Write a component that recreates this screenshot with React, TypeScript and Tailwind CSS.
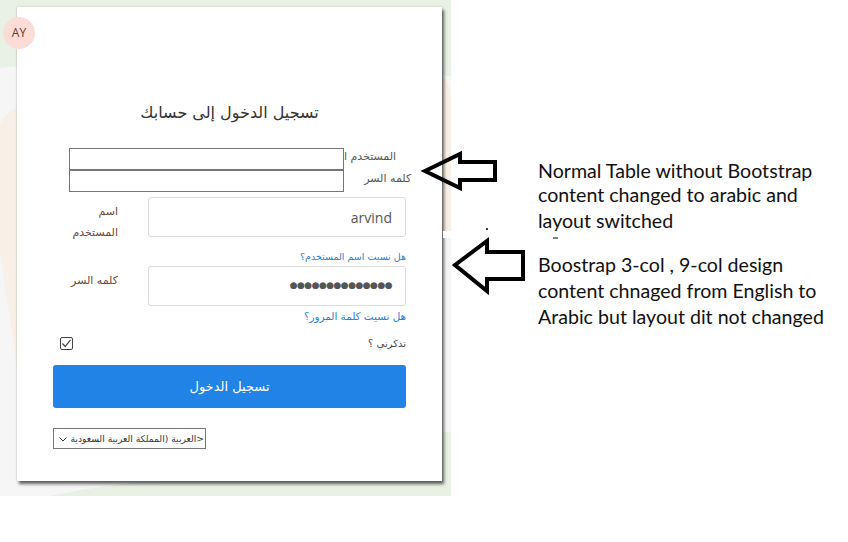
const ARABIC = "font-['DejaVu_Sans',sans-serif]"

function Backdrop() {
  return (
    <svg className="absolute inset-0" width="451" height="496" viewBox="0 0 451 496">
      <rect width="451" height="496" fill="#f6f6f6" />
      <path d="M0 0 H451 V76 C380 70 300 62 200 62 C120 62 50 62 0 68 Z" fill="#e9f0e4" />
      <path d="M0 123 C5 116 11 110 17 107 L438 74 C446 76 450 86 451 98 V232 H0 Z" fill="#f8efe6" />
      <path d="M0 230 H40 L17 365 L0 253 Z" fill="#f8efe6" />
      <path d="M451 432 V496 H50 C90 488 110 485 140 482 C250 480 350 470 440 432 Z" fill="#e9f0e4" />
    </svg>
  )
}

function FieldRow({ label, children }: { label: React.ReactNode; children: React.ReactNode }) {
  return (
    <div className="flex h-[40px] items-start">
      <div className={`w-[95px] pr-[30px] pt-[4px] text-right text-[11px] leading-[21px] text-[#6b4a3a] ${ARABIC}`}>
        {label}
      </div>
      <div className="grow">{children}</div>
    </div>
  )
}

export default function App() {
  return (
    <div className="relative flex h-[542px] w-[848px] overflow-hidden bg-white font-['Lato',sans-serif]">
      {/* screenshot of the login page */}
      <div className="relative h-[496px] w-[451px] shrink-0">
        <Backdrop />
        <div className="absolute left-[17px] top-[7px] h-[474px] w-[425px] bg-white px-[36px] shadow-[2px_3px_3px_rgba(0,0,0,0.6),0_0_2px_rgba(0,0,0,0.2)]">
          <h1 className={`mt-[94px] text-center text-[16px] leading-[24px] text-[#333] ${ARABIC}`} dir="rtl">
            تسجيل الدخول إلى حسابك
          </h1>

          {/* plain table version */}
          <div className="ml-[16px] mt-[23px] flex w-[342px]">
            <div className="w-[275px] shrink-0">
              <div className="h-[22px] border border-[#767676]" />
              <div className="h-[22px] border border-[#767676]" />
            </div>
            <div className={`grow text-[11px] text-[#555] ${ARABIC}`} dir="rtl">
              <div className="h-[22px] whitespace-nowrap pr-[15px] pt-[1px]">المستخدم ا</div>
              <div className="h-[22px] whitespace-nowrap pt-[1px]">كلمه السر</div>
            </div>
          </div>

          <div className="mt-[5px]">
            <FieldRow label={<span dir="rtl" className="block">اسم<br />المستخدم</span>}>
              <div className="flex h-[40px] items-center justify-end rounded-[3px] border border-[#dcdcdc] bg-white pr-[13px] font-['Open_Sans',sans-serif] text-[14px] text-[#555]">
                arvind
              </div>
            </FieldRow>
          </div>
          <div className={`mt-[13px] text-right text-[9.5px] leading-[14px] text-[#2a7fd6] ${ARABIC}`} dir="rtl">
            هل نسيت اسم المستخدم؟
          </div>

          <div className="mt-[2px]">
            <FieldRow label={<span dir="rtl" className="block">كلمه السر</span>}>
              <div className="flex h-[40px] items-center justify-end rounded-[3px] border border-[#dcdcdc] bg-white pr-[13px] text-[#555]">
                <span className={`text-[9px] tracking-[-0.55px] ${ARABIC}`}>●●●●●●●●●●●●●●</span>
              </div>
            </FieldRow>
          </div>
          <div className={`mt-[3px] text-right text-[10.4px] leading-[14px] text-[#2a7fd6] ${ARABIC}`} dir="rtl">
            هل نسيت كلمة المرور؟
          </div>

          <div className="mt-[13px] flex h-[14px] items-center justify-between pl-[7px]">
            <div className="flex h-[13px] w-[13px] items-center justify-center rounded-[2px] border border-[#444] bg-white">
              <svg width="11" height="11" viewBox="0 0 11 11" fill="none" stroke="#444" strokeWidth="1.2">
                <path d="M1.5 5.5 L4.2 8.5 L9.5 1.8" />
              </svg>
            </div>
            <span className={`text-[10px] text-[#444] ${ARABIC}`} dir="rtl">تذكرني ؟</span>
          </div>

          <button className={`mt-[15px] block h-[43px] w-full rounded-[3px] bg-[#2183e6] text-[13px] text-white ${ARABIC}`} dir="rtl">
            تسجيل الدخول
          </button>

          <div className="mt-[20px] flex h-[21px] w-[153px] items-center justify-between border border-[#767676] pl-[4px] pr-[1px] text-[#333]">
            <svg width="10" height="10" viewBox="0 0 10 10" fill="none" stroke="#333" strokeWidth="1">
              <path d="M1.5 3.5 L5 7 L8.5 3.5" />
            </svg>
            <span className={`whitespace-nowrap text-[9.2px] ${ARABIC}`} dir="rtl">&lt;العربية (المملكة العربية السعودية</span>
          </div>
        </div>
        {/* avatar badge hanging off the card corner */}
        <div className="absolute left-[3px] top-[17px] flex h-[32px] w-[32px] items-center justify-center rounded-full bg-[#fbdcd7] font-['Open_Sans',sans-serif] text-[12px] font-medium text-[#6f3529]">
          AY
        </div>
        {/* paste seam in the screenshot */}
        <div className="absolute left-[443px] top-[231px] h-[7px] w-[8px] bg-white" />
      </div>

      {/* hand-drawn arrows */}
      <svg className="absolute left-0 top-0" width="848" height="542" viewBox="0 0 848 542" fill="none" stroke="black" strokeWidth="4">
        <polygon points="425,171 460,154 460,162 495,162 495,180 460,180 460,188" />
        <polygon points="455,265 487,241 487,252 523,252 523,279 487,279 487,291" />
        <path d="M487 228 V230" strokeWidth="1.5" />
        <path d="M553 238 H558" strokeWidth="1" />
      </svg>

      {/* notes */}
      <div className="absolute left-[538px] top-[158px] text-[19.6px] leading-[25px] text-[#111]">
        <div>Normal Table without Bootstrap</div>
        <div className="-mt-[1px]">content changed to arabic and</div>
        <div className="mt-[1px]">layout switched</div>
      </div>
      <div className="absolute left-[538px] top-[252px] text-[19.6px] leading-[26px] text-[#111]">
        <div>Boostrap 3-col , 9-col design</div>
        <div>content chnaged from English to</div>
        <div>Arabic but layout dit not changed</div>
      </div>
    </div>
  )
}
